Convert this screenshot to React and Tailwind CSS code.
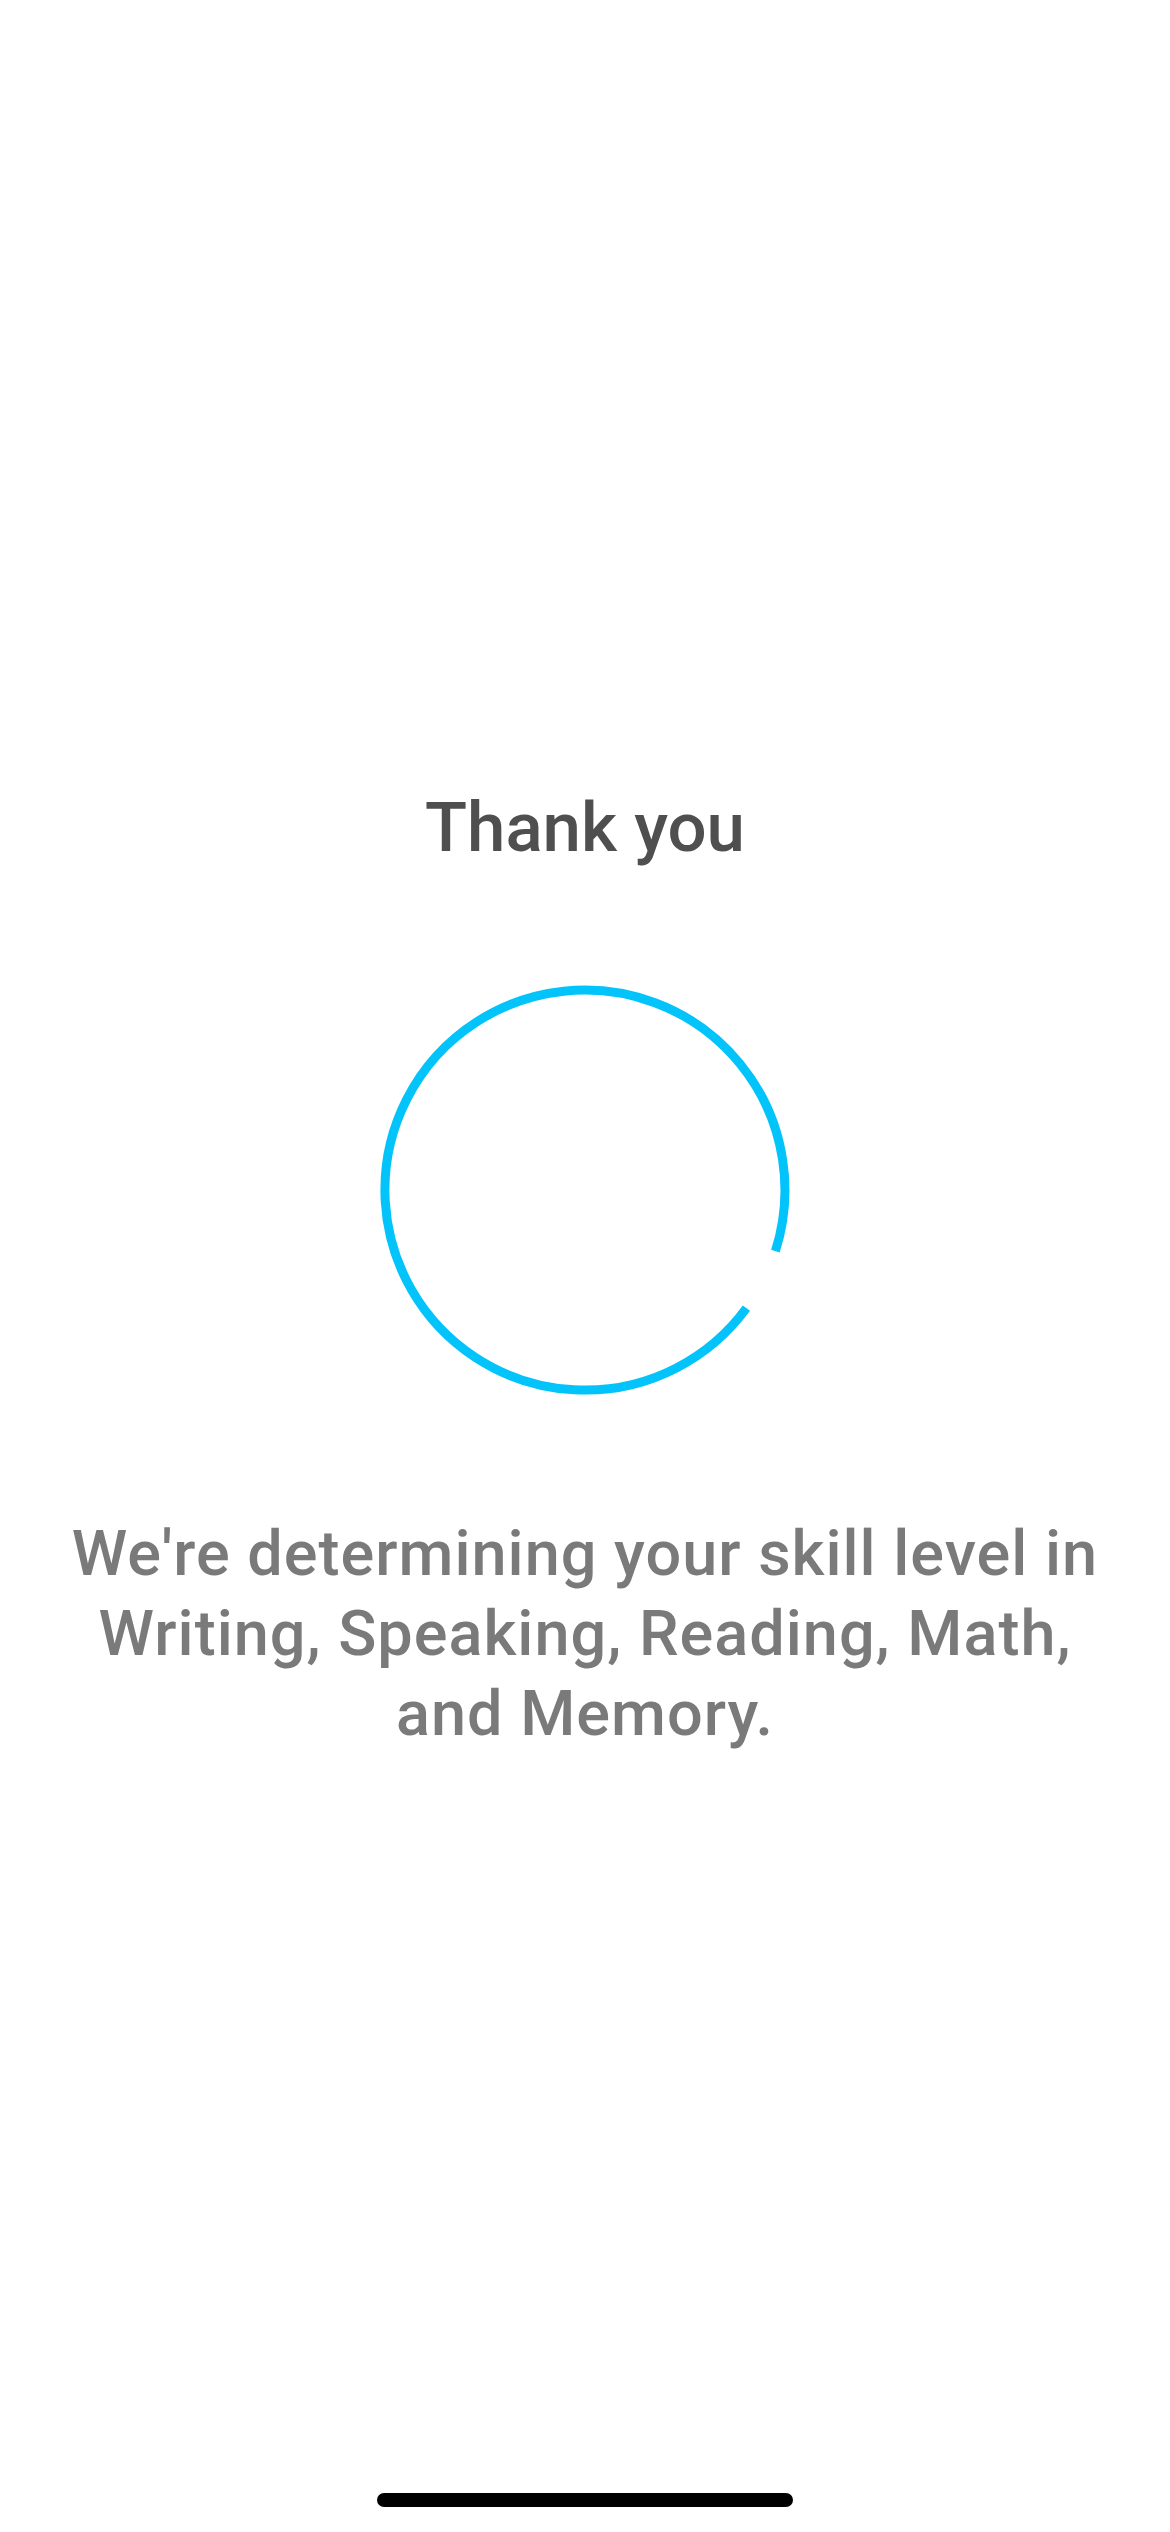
export default function App() {
  return (
    <div className="relative flex flex-col items-center h-[2532px] bg-white" style={{ fontFamily: 'Roboto, "Liberation Sans", sans-serif' }}>
      <div className="flex flex-col items-center pt-[788px]">
        <h1 className="text-[69px] leading-[80px] font-medium text-[#4f4f4f]">Thank you</h1>

        {/* loading ring */}
        <svg className="mt-[112px]" width="420" height="420" viewBox="0 0 420 420" fill="none">
          <path d="M 371.4 328.1 A 200 200 0 1 1 400.4 271.1" stroke="#03c4fa" strokeWidth="9" />
        </svg>

        <p className="mt-[114px] text-center text-[63px] leading-[80px] font-medium tracking-[1px] text-[#7a7a7a]">
          We're determining your skill level in
          <br />
          Writing, Speaking, Reading, Math,
          <br />
          and Memory.
        </p>
      </div>

      <div className="mt-auto mb-[25px] w-[416px] h-[14px] rounded-full bg-black" />
    </div>
  )
}
